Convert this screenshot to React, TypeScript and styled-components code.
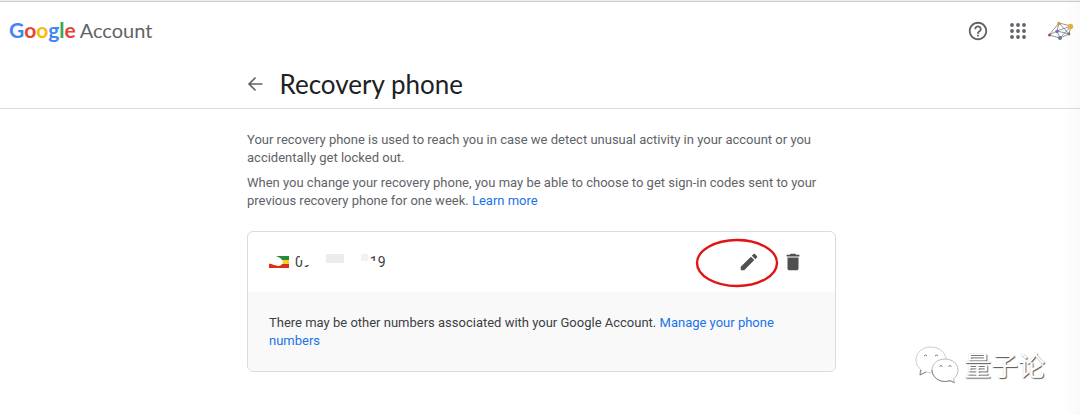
import React from 'react';
import styled, { createGlobalStyle } from 'styled-components';

const GlobalStyle = createGlobalStyle`
  * { box-sizing: border-box; }
  body {
    margin: 0;
    background: #fff;
    color: #5f6368;
    font-family: Roboto, "Liberation Sans", sans-serif;
    font-size: 13px;
    line-height: 18px;
  }
`;

const Page = styled.div`
  position: relative;
  min-height: 100vh;
  border-top: 1px solid #eee;

  &::after {
    content: "";
    position: absolute;
    inset: 0 0 0 auto;
    width: 20px;
    background: linear-gradient(to right, transparent, rgba(0, 0, 0, 0.02));
    pointer-events: none;
  }
`;

const TopBar = styled.header`
  display: flex;
  align-items: center;
  justify-content: space-between;
  height: 59px;
  padding: 0 5px 0 9px;
  border-top: 1px solid #ccc;
`;

const Brand = styled.a`
  display: flex;
  align-items: baseline;
  gap: 4px;
  padding-bottom: 2px;
  color: #5f6368;
  font-family: Lato, sans-serif;
  font-size: 20px;
  line-height: 28px;
  text-decoration: none;
`;

const Wordmark = styled.span`
  font-size: 21px;
  font-weight: 700;
`;

const Letter = styled.span<{ $color: string }>`
  color: ${(p) => p.$color};
`;

const Tools = styled.nav`
  display: flex;
  align-items: center;
  gap: 18px;
`;

const IconButton = styled.button`
  position: relative;
  display: flex;
  padding: 0;
  border: 0;
  background: none;
  color: #5f6368;
  cursor: pointer;

  svg { display: block; }
`;

const TitleBar = styled.div`
  padding-left: 2px;
  border-bottom: 1px solid #dadce0;
`;

const TitleRow = styled.div`
  display: flex;
  align-items: center;
  gap: 16px;
  max-width: 589px;
  height: 48px;
  margin: 0 auto;
`;

const Title = styled.h1`
  margin: 0;
  color: #202124;
  font-family: Lato, sans-serif;
  font-size: 26px;
  font-weight: 400;
  line-height: 34px;
`;

const Main = styled.main`
  padding: 22px 0 42px 3px;
`;

const Content = styled.div`
  max-width: 589px;
  margin: 0 auto;
`;

const Paragraph = styled.p`
  margin: 0 0 7px;
`;

const Link = styled.a`
  color: #1a73e8;
  text-decoration: none;
`;

const Card = styled.section`
  margin-top: 21px;
  border: 1px solid #dadce0;
  border-radius: 6px;
  overflow: hidden;
`;

const PhoneRow = styled.div`
  display: flex;
  align-items: center;
  height: 60px;
  padding: 0 31px 0 21px;
`;

const PhoneNumber = styled.span`
  position: relative;
  flex: 1;
  margin-left: 6px;
  color: #3c4043;
  font-size: 14px;
  white-space: pre;
`;

const Mask = styled.span<{ $left: number; $top: number; $w: number; $h: number; $color?: string }>`
  position: absolute;
  left: ${(p) => p.$left}px;
  top: ${(p) => p.$top}px;
  width: ${(p) => p.$w}px;
  height: ${(p) => p.$h}px;
  background: ${(p) => p.$color ?? '#fff'};
`;

const Actions = styled.div`
  display: flex;
  gap: 22px;
`;

const Ring = styled.svg`
  position: absolute;
  left: -43px;
  top: -13px;
  pointer-events: none;
`;

const CardNote = styled.p`
  margin: 0;
  padding: 22px 48px 21px 21px;
  background: #f9f9fa;
  color: #3c4043;
`;

const Watermark = styled.div`
  position: absolute;
  right: 35px;
  bottom: 30px;
  display: flex;
  align-items: center;
  gap: 5px;
  color: #fff;
  font-family: "Noto Sans CJK SC", sans-serif;
  font-size: 27px;
  line-height: 36px;
  text-shadow: 0 0 1px #ccc, 1px 1px 1px #444;
`;

const Google = () => (
  <Wordmark>
    <Letter $color="#4285f4">G</Letter>
    <Letter $color="#ea4335">o</Letter>
    <Letter $color="#fbbc05">o</Letter>
    <Letter $color="#4285f4">g</Letter>
    <Letter $color="#34a853">l</Letter>
    <Letter $color="#ea4335">e</Letter>
  </Wordmark>
);

const HelpIcon = () => (
  <svg width="22" height="22" viewBox="0 0 24 24" fill="currentColor">
    <path d="M11 18h2v-2h-2v2zm1-16C6.48 2 2 6.48 2 12s4.48 10 10 10 10-4.48 10-10S17.52 2 12 2zm0 18c-4.41 0-8-3.59-8-8s3.59-8 8-8 8 3.59 8 8-3.59 8-8 8zm0-14c-2.21 0-4 1.79-4 4h2c0-1.100.9-2 2-2s2 .9 2 2c0 2-3 1.750-3 5h2c0-2.250 3-2.500 3-5 0-2.210-1.790-4-4-4z" />
  </svg>
);

const AppsIcon = () => (
  <svg width="22" height="22" viewBox="0 0 22 22" fill="currentColor">
    {[5, 11, 17].flatMap((y) =>
      [5, 11, 17].map((x) => <circle key={`${x}-${y}`} cx={x} cy={y} r="1.9" />),
    )}
  </svg>
);

const AvatarIcon = () => (
  <svg width="28" height="22" viewBox="0 0 28 22">
    <path
      d="M2 15L12 3L24 6L22 14L13 18Z M2 15L10 11L24 6L13 18L10 11L12 3L22 14L10 11"
      fill="none"
      stroke="#777a80"
      strokeWidth="0.8"
    />
    <circle cx="2.5" cy="15" r="1.5" fill="#b3475b" />
    <circle cx="12" cy="3.5" r="1.7" fill="#c99b3e" />
    <circle cx="23.5" cy="6.5" r="2.7" fill="#e5b240" />
    <circle cx="22" cy="14" r="1.4" fill="#76716a" />
    <circle cx="13" cy="18" r="2" fill="#6379a8" />
    <circle cx="10" cy="11.5" r="1.7" fill="#8168c4" />
  </svg>
);

const BackIcon = () => (
  <svg width="17" height="20" viewBox="0 0 17 20" fill="none" stroke="currentColor" strokeWidth="1.6">
    <path d="M15.500 10H2.500M8.500 3.500L2 10l6.500 6.500" />
  </svg>
);

const EditIcon = () => (
  <svg width="22" height="22" viewBox="0 0 24 24" fill="#505050">
    <path d="M3 17.250V21h3.750L17.810 9.940l-3.750-3.750L3 17.250zM20.710 7.040c.39-.39.39-1.020 0-1.410l-2.340-2.340c-.39-.39-1.020-.39-1.410 0l-1.830 1.830 3.750 3.750 1.830-1.830z" />
  </svg>
);

const TrashIcon = () => (
  <svg width="22" height="22" viewBox="0 0 24 24" fill="#505050">
    <path d="M6 19c0 1.100.9 2 2 2h8c1.100 0 2-.9 2-2V7H6v12zM19 4h-3.500l-1-1h-5l-1 1H5v2h14V4z" />
  </svg>
);

const Flag = () => (
  <svg width="20" height="12" viewBox="0 0 20 12">
    <rect width="20" height="4" fill="#238a3b" />
    <rect y="4" width="20" height="4" fill="#f5d21f" />
    <rect y="8" width="20" height="4" fill="#dc2f1c" />
    <path d="M0 0H7Q13 2 14 6Q13 10 9 10Q4 9 0 7Z" fill="#fff" />
  </svg>
);

const ChatIcon = () => (
  <svg width="44" height="38" viewBox="0 0 44 38" fill="#fff" stroke="#999" strokeWidth="1">
    <path d="M16 1C7.500 1 1 6.500 1 14c0 4 2 7.500 5.500 10L5 29l6-3c2 .6 4 .8 6 .8C25 26.500 31 21 31 14S24.500 1 16 1Z" stroke="#ccc" />
    <path d="M30 13c-7.500 0-13 5-13 11s5.500 11.500 13 11.500c1.700 0 3.400-.3 5-.8l4.500 2-1-4c3-2.200 4.500-5 4.500-8.500C43 18 37.500 13 30 13Z" stroke="#bbb" />
    <path d="M9 10q1.500-2 3 0M20 10q1.500-2 3 0M24.500 20.500q1.500-2 3 0M33.500 20.500q1.500-2 3 0" fill="none" stroke="#777" />
    <path d="M5.500 24L5 29l6-3M17 24c0 6 5.500 11.500 13 11.500c1.700 0 3.400-.3 5-.8l4.500 2" fill="none" stroke="#888" />
  </svg>
);

export default function App() {
  return (
    <Page>
      <GlobalStyle />
      <TopBar>
        <Brand href="#">
          <Google />
          <span>Account</span>
        </Brand>
        <Tools>
          <IconButton aria-label="Help"><HelpIcon /></IconButton>
          <IconButton aria-label="Google apps"><AppsIcon /></IconButton>
          <IconButton aria-label="Profile"><AvatarIcon /></IconButton>
        </Tools>
      </TopBar>
      <TitleBar>
        <TitleRow>
          <IconButton aria-label="Back"><BackIcon /></IconButton>
          <Title>Recovery phone</Title>
        </TitleRow>
      </TitleBar>
      <Main>
        <Content>
          <Paragraph>
            Your recovery phone is used to reach you in case we detect unusual activity in your account or you
            accidentally get locked out.
          </Paragraph>
          <Paragraph>
            When you change your recovery phone, you may be able to choose to get sign-in codes sent to your
            previous recovery phone for one week. <Link href="#">Learn more</Link>
          </Paragraph>
          <Card>
            <PhoneRow>
              <Flag />
              <PhoneNumber>
                {'09                 19'}
                <Mask $left={5} $top={1} $w={4} $h={6} />
                <Mask $left={8} $top={1} $w={10} $h={11} />
                <Mask $left={31} $top={1} $w={18} $h={9} $color="#ececec" />
                <Mask $left={66} $top={1} $w={7} $h={7} $color="#f2f2f2" />
                <Mask $left={73} $top={8} $w={8} $h={8} />
              </PhoneNumber>
              <Actions>
                <IconButton aria-label="Edit phone">
                  <EditIcon />
                  <Ring width="84" height="50" viewBox="0 0 84 50">
                    <ellipse cx="42" cy="25" rx="40" ry="23" fill="none" stroke="#e01515" strokeWidth="2.4" />
                  </Ring>
                </IconButton>
                <IconButton aria-label="Delete phone"><TrashIcon /></IconButton>
              </Actions>
            </PhoneRow>
            <CardNote>
              There may be other numbers associated with your Google Account.{' '}
              <Link href="#">Manage your phone numbers</Link>
            </CardNote>
          </Card>
        </Content>
      </Main>
      <Watermark>
        <ChatIcon />
        <span>量子论</span>
      </Watermark>
    </Page>
  );
}
